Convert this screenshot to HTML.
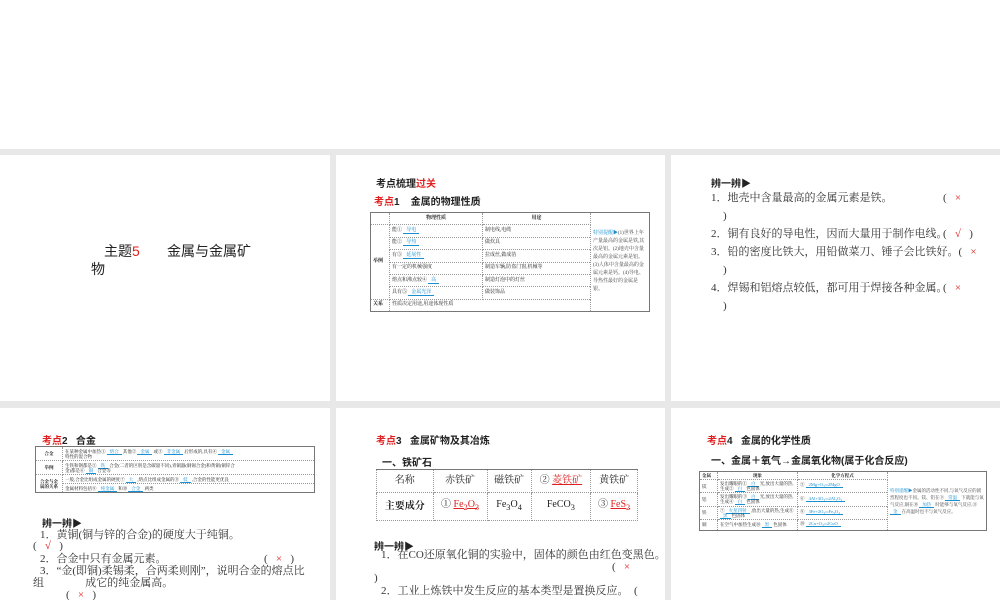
<!DOCTYPE html><html><head><meta charset="utf-8"><style>
*{margin:0;padding:0;box-sizing:border-box}
body{width:1000px;height:600px;overflow:hidden;background:#fff;font-family:"Liberation Serif","Noto Serif CJK SC","Noto Sans CJK SC",serif;color:#222;position:relative}
.bg{position:absolute;left:0;top:149px;width:1000px;height:451px;background:#e8e8e8}
.p{position:absolute;background:#fff;overflow:hidden}
.a{position:absolute;white-space:nowrap}
.r{color:#e02020}.b{color:#1a8fd0}
.t{font-size:11px;line-height:13px;color:#333}
.h{font-size:10px;font-weight:bold;font-family:"Liberation Sans","Noto Sans CJK SC",sans-serif}
table{border-collapse:collapse;position:absolute;font-size:5px;line-height:6px}
td{border:1px dotted #999;padding:1px 2px;vertical-align:middle}
.ot{border:1px solid #777}
u{text-decoration:none;border-bottom:1px solid #1a8fd0;color:#1a8fd0;padding:0 3px}
</style></head><body>
<div class="bg"></div>
<!-- row1 -->
<div class="p" style="left:0;top:155px;width:330px;height:246px">
<div class="a" style="left:104px;top:86px;font-size:14px;font-family:'Liberation Sans','Noto Sans CJK SC',sans-serif">主题<span class="r">5</span>&nbsp;&nbsp;&nbsp;&nbsp;&nbsp;&nbsp;&nbsp;金属与金属矿</div>
<div class="a" style="left:91px;top:104px;font-size:14px;font-family:'Liberation Sans','Noto Sans CJK SC',sans-serif">物</div>
</div>
<div class="p" style="left:336px;top:155px;width:329px;height:246px">
<div class="a h" style="left:40px;top:20px">考点梳理<span class="r">过关</span></div>
<div class="a h" style="left:38px;top:38px"><span class="r">考点</span>1&nbsp;&nbsp;&nbsp;&nbsp;金属的物理性质</div>
<table class="ot" style="left:34px;top:57px;width:280px;height:100px">
<tr><td style="width:19px"></td><td style="width:93px;text-align:center;font-weight:bold">物理性质</td><td style="width:108px;text-align:center;font-weight:bold">用途</td><td rowspan="8" style="font-size:5px;line-height:8px;color:#444"><span class="b">特别提醒▶</span>(1)世界上年产量最高的金属是铁,其次是铝。(2)地壳中含量最高的金属元素是铝。(3)人体中含量最高的金属元素是钙。(4)导电、导热性最好的金属是银。</td></tr>
<tr><td rowspan="6" style="font-weight:bold">举例</td><td>能① <u>导电</u></td><td>制电线,电缆</td></tr>
<tr><td>能② <u>导热</u></td><td>做炊具</td></tr>
<tr><td>有③ <u>延展性</u></td><td>拉成丝,做成箔</td></tr>
<tr><td>有一定的机械强度</td><td>制造车辆,防盗门窗,机械等</td></tr>
<tr><td>熔点和沸点较④ <u>高</u></td><td>制造灯泡中的灯丝</td></tr>
<tr><td>具有⑤ <u>金属光泽</u></td><td>做装饰品</td></tr>
<tr><td style="font-weight:bold">关系</td><td colspan="2">性质决定用途,用途体现性质</td></tr>
</table>
</div>
<div class="p" style="left:671px;top:155px;width:329px;height:246px">
<div class="a h" style="left:40px;top:20px">辨一辨▶</div>
<div class="a t" style="left:40px;top:37px">1．地壳中含量最高的金属元素是铁。</div><div class="a t" style="left:272px;top:37px">(&nbsp;&nbsp;&nbsp;<span class="r">×</span></div>
<div class="a t" style="left:52px;top:55px">)</div>
<div class="a t" style="left:40px;top:73px">2．铜有良好的导电性，因而大量用于制作电线。</div><div class="a t" style="left:272px;top:73px">(&nbsp;&nbsp;&nbsp;<span class="r">√</span>&nbsp;&nbsp;&nbsp;)</div>
<div class="a t" style="left:40px;top:91px">3．铅的密度比铁大，用铅做菜刀、锤子会比铁好。(&nbsp;&nbsp;&nbsp;<span class="r">×</span></div>
<div class="a t" style="left:52px;top:109px">)</div>
<div class="a t" style="left:40px;top:127px">4．焊锡和铝熔点较低，都可用于焊接各种金属。</div><div class="a t" style="left:272px;top:127px">(&nbsp;&nbsp;&nbsp;<span class="r">×</span></div>
<div class="a t" style="left:52px;top:145px">)</div>
</div>
<!-- row2 -->
<div class="p" style="left:0;top:408px;width:330px;height:192px">
<div class="a h" style="left:42px;top:24px"><span class="r">考点</span>2&nbsp;&nbsp;&nbsp;合金</div>
<table class="ot" style="left:35px;top:38px;width:280px;height:47px;font-size:4.5px;line-height:5px">
<tr><td style="width:27px;font-weight:bold;text-align:center">合金</td><td>在某种金属中加热① <u>熔合</u> 其他② <u>金属</u> 或③ <u>非金属</u> 后形成的,具有④ <u>金属</u><br>特性的混合物</td></tr>
<tr><td style="font-weight:bold;text-align:center">举例</td><td>生铁和钢都是⑤ <u>铁</u> 合金(二者的区别是含碳量不同),青铜器(铜锡合金)和黄铜(铜锌合<br>金)都是⑥ <u>铜</u> 合金等</td></tr>
<tr><td rowspan="2" style="font-weight:bold;text-align:center">合金与金<br>属的关系</td><td>一般,合金比组成金属的硬度⑦ <u>大</u> ,熔点比组成金属的⑧ <u>低</u> ,合金的性能更优良</td></tr>
<tr><td>金属材料包括⑨ <u>纯金属</u> 和⑩ <u>合金</u> 两类</td></tr>
</table>
<div class="a h" style="left:42px;top:107px">辨一辨▶</div>
<div class="a t" style="left:40px;top:121px">1．黄铜(铜与锌的合金)的硬度大于纯铜。</div>
<div class="a t" style="left:33px;top:132px">(&nbsp;&nbsp;&nbsp;<span class="r">√</span>&nbsp;&nbsp;&nbsp;)</div>
<div class="a t" style="left:40px;top:145px">2．合金中只有金属元素。</div><div class="a t" style="left:264px;top:145px">(&nbsp;&nbsp;&nbsp;<span class="r">×</span>&nbsp;&nbsp;&nbsp;)</div>
<div class="a t" style="left:40px;top:157px">3．“金(即铜)柔锡柔，合两柔则刚”，说明合金的熔点比</div>
<div class="a t" style="left:33px;top:169px">组&nbsp;&nbsp;&nbsp;&nbsp;&nbsp;&nbsp;&nbsp;&nbsp;&nbsp;&nbsp;&nbsp;&nbsp;&nbsp;&nbsp;&nbsp;成它的纯金属高。</div>
<div class="a t" style="left:66px;top:181px">(&nbsp;&nbsp;&nbsp;<span class="r">×</span>&nbsp;&nbsp;&nbsp;)</div>
</div>
<div class="p" style="left:336px;top:408px;width:329px;height:192px">
<div class="a h" style="left:40px;top:24px"><span class="r">考点</span>3&nbsp;&nbsp;&nbsp;金属矿物及其冶炼</div>
<div class="a h" style="left:46px;top:46px">一、铁矿石</div>
<table style="left:40px;top:61px;width:262px;height:52px;font-size:10px;line-height:12px;text-align:center;border-top:1px solid #777">
<tr><td>名称</td><td>赤铁矿</td><td>磁铁矿</td><td class="r"><span style="color:#222">②</span> <span style="text-decoration:underline">菱铁矿</span></td><td>黄铁矿</td></tr>
<tr><td style="font-weight:bold">主要成分</td><td>① <span class="r" style="text-decoration:underline">Fe<sub>2</sub>O<sub>3</sub></span></td><td>Fe<sub>3</sub>O<sub>4</sub></td><td>FeCO<sub>3</sub></td><td>③ <span class="r" style="text-decoration:underline">FeS<sub>2</sub></span></td></tr>
</table>
<div class="a h" style="left:38px;top:130px">辨一辨▶</div>
<div class="a t" style="left:45px;top:141px">1．在CO还原氧化铜的实验中，固体的颜色由红色变黑色。</div>
<div class="a t" style="left:276px;top:153px">(&nbsp;&nbsp;&nbsp;<span class="r">×</span></div>
<div class="a t" style="left:38px;top:164px">)</div>
<div class="a t" style="left:45px;top:177px">2．工业上炼铁中发生反应的基本类型是置换反应。&nbsp;&nbsp;(</div>
</div>
<div class="p" style="left:671px;top:408px;width:329px;height:192px">
<div class="a h" style="left:36px;top:24px"><span class="r">考点</span>4&nbsp;&nbsp;&nbsp;金属的化学性质</div>
<div class="a h" style="left:40px;top:44px">一、金属＋氧气→金属氧化物(属于化合反应)</div>
<table class="ot" style="left:28px;top:63px;width:288px;height:60px;font-size:4.5px;line-height:5px">
<tr><td style="width:18px;font-weight:bold">金属</td><td style="width:80px;text-align:center;font-weight:bold">现象</td><td style="width:90px;text-align:center;font-weight:bold">化学方程式</td><td rowspan="5" style="line-height:7px;color:#444"><span class="b">特别提醒▶</span>金属的活动性不同,与氧气反应的剧烈程度也不同。镁、铝在⑨ <u>常温</u> 下就能与氧气反应,铜在⑩ <u>加热</u> 时能够与氧气反应,⑪ <u>金</u> 在高温时也不与氧气反应。</td></tr>
<tr><td>镁</td><td>发出耀眼的① <u>白</u> 光,放出大量的热,生成② <u>白</u> 色固体</td><td>⑤ <u>2Mg+O<sub>2</sub>═2MgO</u></td></tr>
<tr><td>铝</td><td>发出耀眼的③ <u>白</u> 光,放出大量的热,生成④ <u>白</u> 色固体</td><td>⑥ <u>4Al+3O<sub>2</sub>═2Al<sub>2</sub>O<sub>3</sub></u></td></tr>
<tr><td>铁</td><td>⑦ <u>火星四射</u> ,放出大量的热,生成⑧ <u>黑</u> 色固体</td><td>⑨ <u>3Fe+2O<sub>2</sub>═Fe<sub>3</sub>O<sub>4</sub></u></td></tr>
<tr><td>铜</td><td>在空气中加热生成⑩ <u>黑</u> 色固体</td><td>⑩ <u>2Cu+O<sub>2</sub>═2CuO</u></td></tr>
</table>
</div>
</body></html>
